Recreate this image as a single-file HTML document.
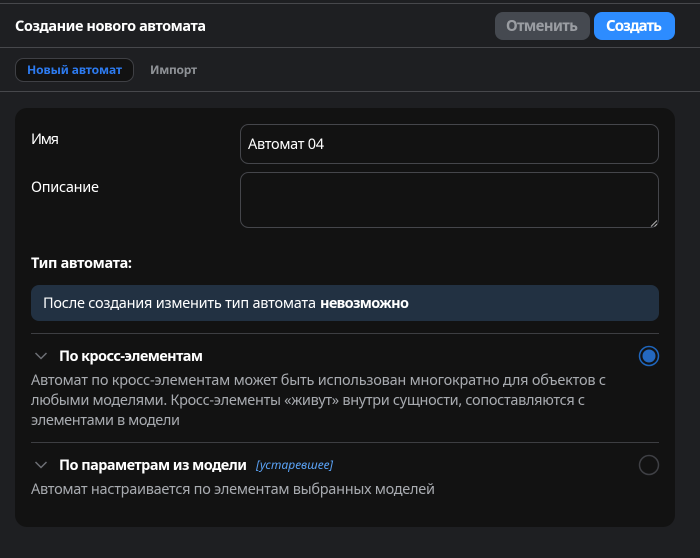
<!DOCTYPE html>
<html><head><meta charset="utf-8"><style>
html,body{margin:0;padding:0;width:700px;height:558px;overflow:hidden;background:#1e1f22}
svg{display:block;position:absolute;left:0;top:0}
text{font-family:"Noto Sans","DejaVu Sans",sans-serif;font-size:14.5px;fill:#fff;white-space:pre}
.b{font-weight:700;font-size:14.5px}
.g{fill:#a8abb0}
</style></head><body>
<svg width="700" height="558" viewBox="0 0 700 558">
<rect width="700" height="558" fill="#1e1f22"/>
<rect y="3" width="700" height="1" fill="#47484c"/>
<rect y="47" width="700" height="1" fill="#47484c"/>
<rect y="91" width="700" height="1" fill="#47484c"/>
<text class="b" x="15" y="31" textLength="191">Создание нового автомата</text>
<rect x="495" y="12" width="95" height="28" rx="8" fill="#454950"/>
<text class="b" x="506" y="31" textLength="72" style="font-size:15px;fill:#9a9da2">Отменить</text>
<rect x="594" y="12" width="81" height="28" rx="8" fill="#2d8cff"/>
<text class="b" x="606" y="31" textLength="56" style="font-size:15px">Создать</text>
<rect x="15.5" y="58.5" width="118" height="23" rx="8" fill="#121212" stroke="#3f4045"/>
<text class="b" x="27" y="74" textLength="95" style="font-size:12px;fill:#2d7bf0">Новый автомат</text>
<text class="b" x="150" y="74" textLength="47" style="font-size:12px;fill:#8f9297">Импорт</text>
<rect x="15" y="108" width="660" height="419" rx="12" fill="#121212"/>
<text x="31" y="144" textLength="28">Имя</text>
<text x="31" y="192" textLength="68">Описание</text>
<rect x="240.5" y="124.5" width="418" height="39" rx="8" fill="#121212" stroke="#45464b"/>
<text x="248" y="149" textLength="76">Автомат 04</text>
<rect x="240.5" y="172.5" width="418" height="55" rx="8" fill="#121212" stroke="#45464b"/>
<path d="M651 226.5L657 220.5M654.5 226.5L657 224" stroke="#b0b0b0" stroke-width="1" fill="none"/>
<text class="b" x="31" y="268" textLength="101">Тип автомата:</text>
<rect x="31" y="285" width="628" height="36" rx="8" fill="#223142"/>
<text x="43" y="308" textLength="273">После создания изменить тип автомата</text>
<text class="b" x="320" y="308" textLength="89">невозможно</text>
<rect x="31" y="333" width="628" height="1" fill="#3d3e42"/>
<path d="M35.5 353L41 358.5L46.5 353" stroke="#6d6f74" stroke-width="1.5" fill="none"/>
<text class="b" x="59" y="361" textLength="144">По кросс-элементам</text>
<circle cx="649" cy="356" r="9.5" fill="none" stroke="#1f66bd" stroke-width="1.5"/>
<circle cx="649" cy="356" r="6.5" fill="#2468bf"/>
<text class="g" x="31" y="385" textLength="575">Автомат по кросс-элементам может быть использован многократно для объектов с</text>
<text class="g" x="31" y="405" textLength="554">любыми моделями. Кросс-элементы «живут» внутри сущности, сопоставляются с</text>
<text class="g" x="31" y="425" textLength="149">элементами в модели</text>
<rect x="31" y="442" width="628" height="1" fill="#3d3e42"/>
<path d="M35.5 462L41 467.5L46.5 462" stroke="#6d6f74" stroke-width="1.5" fill="none"/>
<text class="b" x="59" y="470" textLength="188">По параметрам из модели</text>
<text x="256" y="469" textLength="77" style="font-size:12px;font-style:italic;fill:#5aa2f5">[устаревшее]</text>
<circle cx="649" cy="465" r="9.5" fill="none" stroke="#3f4045" stroke-width="1.5"/>
<text class="g" x="31" y="494" textLength="404">Автомат настраивается по элементам выбранных моделей</text>
</svg>
</body></html>
